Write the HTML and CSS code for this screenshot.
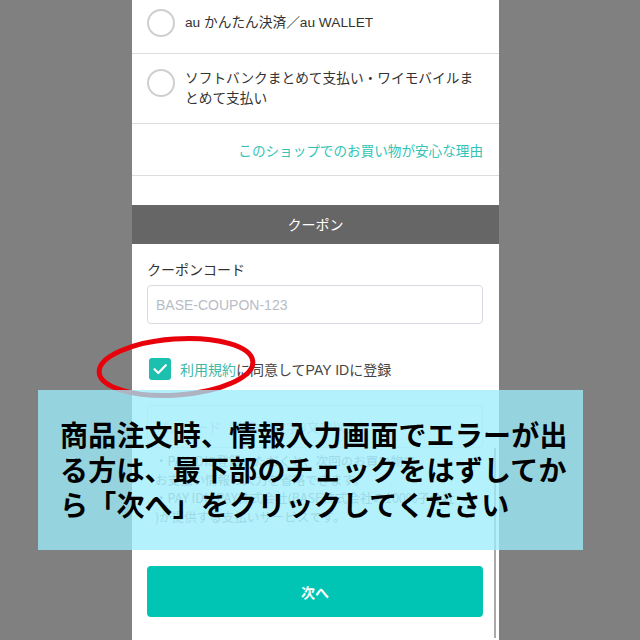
FILE: index.html
```html
<!DOCTYPE html>
<html lang="ja">
<head>
    <meta charset="UTF-8">
    <meta name="viewport" content="width=device-width, initial-scale=1.0">
    <title>お支払い方法</title>
    <link rel="stylesheet" href="styles.css">
</head>
<body>
    <div class="panel">
        <div class="pay-row first">
            <span class="radio"></span>
            <span class="pay-name">au かんたん決済／au WALLET</span>
        </div>
        <div class="pay-row multi">
            <span class="radio"></span>
            <span class="pay-name">ソフトバンクまとめて支払い・ワイモバイルまとめて支払い</span>
        </div>
        <div class="safe-row">
            <a class="safe-link" href="#">このショップでのお買い物が安心な理由</a>
        </div>
        <div class="spacer"></div>

        <div class="section-head">クーポン</div>
        <div class="coupon">
            <label class="field-label">クーポンコード</label>
            <input class="field" type="text" placeholder="BASE-COUPON-123">

            <div class="agree">
                <span class="checkbox">
                    <svg width="22" height="22" viewBox="0 0 22 22">
                        <path d="M5.5 11.2 L9.3 15 L16.8 7.2" fill="none" stroke="#fff" stroke-width="2.2" stroke-linecap="round" stroke-linejoin="round"/>
                    </svg>
                </span>
                <span class="agree-text"><a href="#">利用規約</a>に同意してPAY IDに登録</span>
            </div>

            <input class="field faint" type="password" placeholder="パスワード（半角英数字8文字以上）">

            <div class="notes">
                <p>・PAY IDに登録いただくと、次回のお買い物で<br>お支払い情報の入力を省略できます。</p>
                <p>・PAY IDはPAY株式会社(BASE株式会社の100%子会社<br>)が提供する支払いサービスです。</p>
            </div>

            <button class="next-button">次へ</button>
        </div>
        <div class="scrollbar"></div>
    </div>

    <svg class="mark" width="170" height="74" viewBox="0 0 170 74">
        <ellipse cx="82" cy="36" rx="77" ry="28" transform="rotate(-4 82 36)" fill="none" stroke="#e8000b" stroke-width="5"/>
    </svg>

    <div class="notice">
        商品注文時、情報入力画面でエラーが出る方は、最下部のチェックをはずしてから「次へ」をクリックしてください
    </div>
</body>
</html>
```

FILE: styles.css
```css
body {
    margin: 0;
    height: 640px;
    overflow: hidden;
    background-color: #808080;
    font-family: "Noto Sans CJK JP", "Liberation Sans", sans-serif;
    color: #333;
}

.panel {
    position: relative;
    width: 367px;
    height: 640px;
    margin-left: 132px;
    background-color: #fff;
    overflow: hidden;
}

.pay-row {
    display: flex;
    align-items: center;
    gap: 10px;
    padding: 0 16px 0 15px;
    border-bottom: 1px solid #ddd;
    font-size: 13.7px;
    line-height: 20px;
}

.pay-row.first {
    padding-top: 9px;
    padding-bottom: 16px;
}

.pay-row.multi {
    align-items: flex-start;
    padding-top: 15px;
    padding-bottom: 14px;
}

.pay-name {
    font-family: "Liberation Sans", "Noto Sans CJK JP", sans-serif;
    width: 300px;
}

.radio {
    flex: none;
    width: 24px;
    height: 24px;
    border: 2px solid #cfcfcf;
    border-radius: 50%;
}

.safe-row {
    height: 51px;
    display: flex;
    align-items: center;
    justify-content: flex-end;
    padding-right: 16px;
    border-bottom: 1px solid #ddd;
}

.safe-link {
    color: #34c4b6;
    font-size: 13.6px;
    text-decoration: none;
}

.spacer {
    height: 29px;
}

.section-head {
    height: 39px;
    line-height: 39px;
    background-color: #666;
    color: #fff;
    text-align: center;
    font-size: 14px;
}

.coupon {
    padding: 14px 16px 0 15px;
}

.field-label {
    display: block;
    font-size: 14px;
    line-height: 22px;
    margin-bottom: 5px;
}

.field {
    display: block;
    box-sizing: border-box;
    width: 100%;
    height: 39px;
    padding: 0 8px;
    border: 1px solid #d6d9df;
    border-radius: 4px;
    font-family: "Liberation Sans", "Noto Sans CJK JP", sans-serif;
    font-size: 14px;
    color: #333;
}

.field::placeholder {
    color: #b8bcc6;
}

.agree {
    display: flex;
    align-items: center;
    gap: 9px;
    margin-top: 34px;
    padding-left: 2px;
}

.checkbox {
    width: 22px;
    height: 22px;
    border-radius: 3px;
    background-color: #1dbfae;
    display: flex;
}

.agree-text {
    font-family: "Liberation Sans", "Noto Sans CJK JP", sans-serif;
    font-size: 14px;
    color: #444;
}

.agree-text a {
    color: #40b8a6;
    text-decoration: none;
}

.field.faint {
    margin-top: 25px;
    height: 43px;
    border-color: #e6e6e6;
}

.field.faint::placeholder {
    color: #ccc;
    font-size: 13px;
}

.notes {
    padding: 4px 0 0 8px;
    font-size: 12.5px;
    line-height: 18.5px;
    color: #999;
    white-space: nowrap;
}

.notes p {
    margin: 0;
}

.next-button {
    display: block;
    width: 100%;
    height: 51px;
    margin-top: 40px;
    border: none;
    border-radius: 4px;
    background-color: #00c5b4;
    color: #fff;
    font-family: "Noto Sans CJK JP", sans-serif;
    font-size: 14px;
    font-weight: 700;
}

.scrollbar {
    position: absolute;
    left: 362px;
    top: 448px;
    width: 2px;
    height: 190px;
    background-color: #aaa;
}

.mark {
    position: absolute;
    left: 94px;
    top: 331px;
}

.notice {
    position: absolute;
    left: 38px;
    top: 390px;
    width: 545px;
    height: 160px;
    box-sizing: border-box;
    padding: 27px 14px 0 22px;
    background-color: rgba(155, 236, 252, 0.76);
    color: #000;
    font-size: 28px;
    font-weight: 700;
    line-height: 35px;
    letter-spacing: 0.2px;
}
```
